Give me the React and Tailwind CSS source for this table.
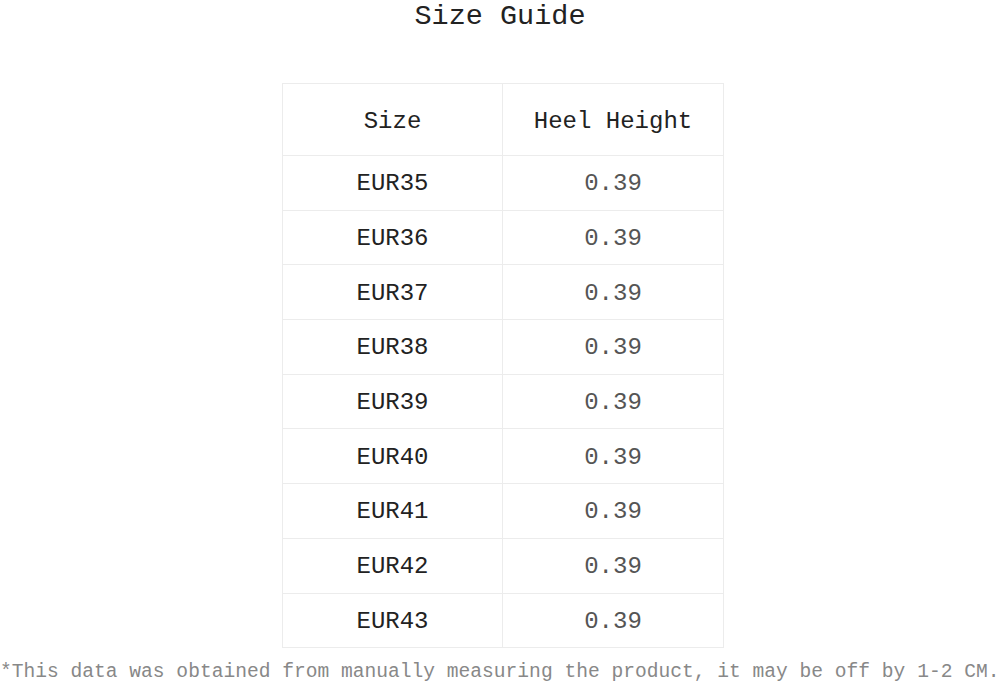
import React from "react";

const sizes = ["EUR35", "EUR36", "EUR37", "EUR38", "EUR39", "EUR40", "EUR41", "EUR42", "EUR43"];

const App = () => {
  return (
    <div className="w-[1000px] h-[685px] bg-white flex flex-col items-center font-['Liberation_Mono',monospace] overflow-hidden">
      {/* TITLE */}
      <h1 className="h-[83px] pt-[2px] text-[28.5px] leading-[30px] text-[#222]">Size Guide</h1>

      {/* TABLE */}
      <table className="ml-[6px] w-[442px] border-collapse">
        <thead>
          <tr className="h-[72px]">
            <th className="w-[220px] pt-[5px] border border-[#ececec] font-normal text-[24px] text-[#222]">Size</th>
            <th className="pt-[5px] border border-[#ececec] font-normal text-[24px] text-[#222]">Heel Height</th>
          </tr>
        </thead>
        <tbody>
          {sizes.map((s) => (
            <tr key={s} className="h-[54.7px]">
              <td className="pt-[3px] border border-[#ececec] text-center text-[24px] text-[#222]">{s}</td>
              <td className="pt-[3px] border border-[#ececec] text-center text-[24px] text-[#555]">0.39</td>
            </tr>
          ))}
        </tbody>
      </table>

      {/* FOOTNOTE */}
      <p className="self-start mt-[12px] whitespace-nowrap text-[19.6px] leading-[24px] text-[#888]">
        *This data was obtained from manually measuring the product, it may be off by 1-2 CM.
      </p>
    </div>
  );
};

export default App;
